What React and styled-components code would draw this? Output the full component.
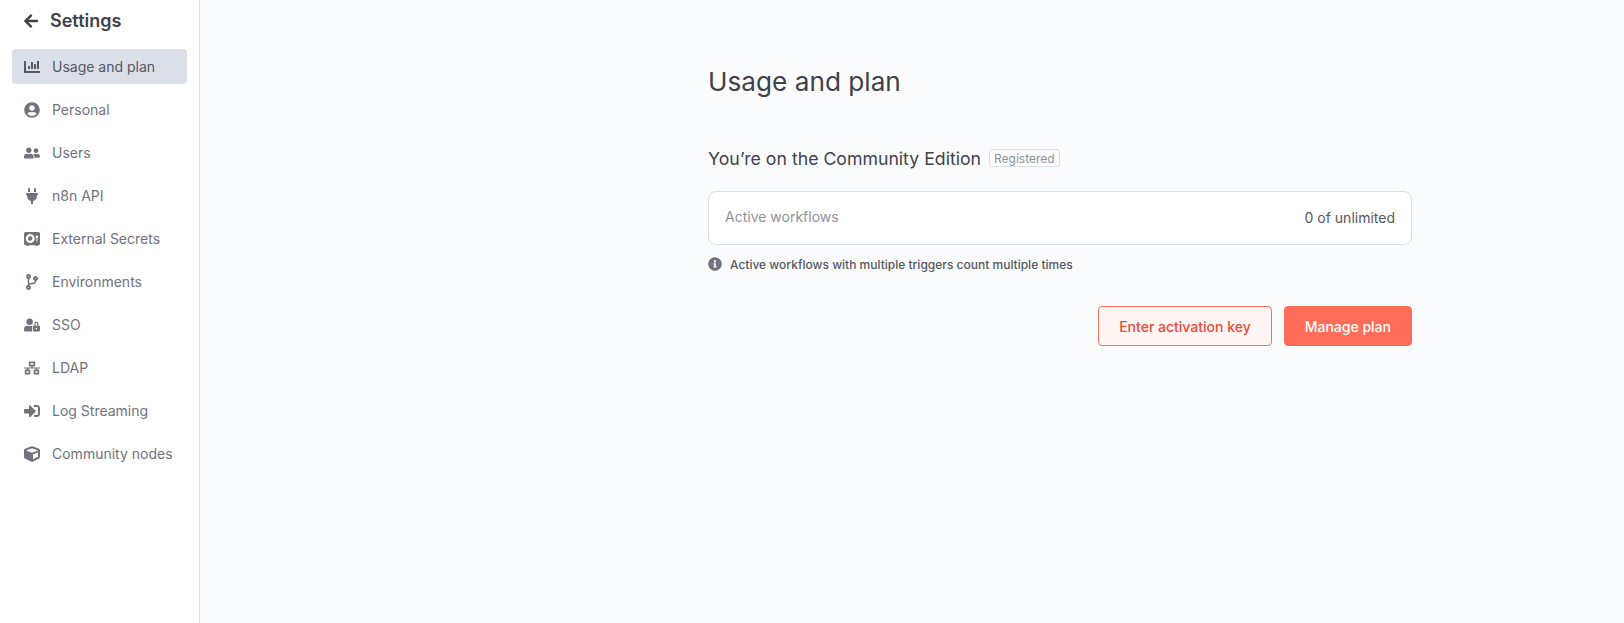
import React from "react";
import styled, { createGlobalStyle } from "styled-components";
import {
  FaChartBar,
  FaUserCircle,
  FaUserFriends,
  FaPlug,
  FaCodeBranch,
  FaUserLock,
  FaNetworkWired,
  FaSignInAlt,
  FaCube,
  FaInfoCircle,
  FaArrowLeft,
} from "react-icons/fa";
import { FaVault } from "react-icons/fa6";

const GlobalStyle = createGlobalStyle`
  html, body {
    margin: 0;
    padding: 0;
    height: 100%;
    background: #fbfcfe;
    font-family: Inter, "Open Sans", sans-serif;
  }
  #root { height: 100%; }
  * { box-sizing: border-box; }
`;

const Page = styled.div`
  display: flex;
  height: 623px;
  overflow: hidden;
`;

const Sidebar = styled.aside`
  width: 200px;
  flex-shrink: 0;
  background: #fff;
  border-right: 1px solid #dbdfe7;
  padding: 0 12px;
`;

const Header = styled.div`
  display: flex;
  align-items: center;
  height: 41px;
  padding-left: 11px;
  gap: 11px;
  color: #3f424b;
  font-size: 18px;
  font-weight: 600;
  svg {
    width: 16px;
    height: 16px;
  }
`;

const Menu = styled.nav`
  display: flex;
  flex-direction: column;
  gap: 8px;
  margin-top: 8px;
`;

const MenuItem = styled.a`
  display: flex;
  align-items: center;
  height: 35px;
  padding-left: 12px;
  border-radius: 4px;
  font-size: 14px;
  color: ${(p) => (p.$active ? "#555761" : "#70737e")};
  background: ${(p) => (p.$active ? "#dbdfe7" : "transparent")};
`;

const MenuIcon = styled.span`
  display: flex;
  justify-content: center;
  width: 16px;
  margin-right: 12px;
  color: inherit;
  svg {
    width: 16px;
    height: 16px;
  }
`;

const Main = styled.main`
  flex: 1;
  padding: 66px 212px 0 508px;
`;

const Content = styled.div`
  display: flex;
  flex-direction: column;
`;

const Title = styled.h1`
  margin: 0;
  font-size: 26.2px;
  line-height: 32px;
  font-weight: 400;
  color: #3f424b;
`;

const Edition = styled.div`
  display: flex;
  align-items: center;
  margin-top: 49px;
  height: 22px;
  font-size: 17.7px;
  color: #3f424b;
`;

const Badge = styled.span`
  display: inline-flex;
  align-items: center;
  height: 18px;
  margin-left: 8px;
  padding: 0 4px;
  border: 1px solid #dbdfe7;
  border-radius: 3px;
  font-size: 12px;
  color: #8f929b;
`;

const Card = styled.div`
  display: flex;
  align-items: center;
  justify-content: space-between;
  height: 54px;
  margin-top: 22px;
  padding: 0 16px 2px;
  background: #fff;
  border: 1px solid #dbdfe7;
  border-radius: 8px;
  font-size: 14px;
`;

const CardLabel = styled.span`
  color: #8f929b;
  padding-bottom: 2px;
`;

const CardValue = styled.span`
  color: #555761;
`;

const Hint = styled.div`
  display: flex;
  align-items: center;
  gap: 8px;
  margin-top: 11px;
  height: 16px;
  font-size: 12px;
  font-weight: 500;
  color: #555761;
  svg {
    width: 14px;
    height: 14px;
    color: #70737e;
  }
`;

const Actions = styled.div`
  display: flex;
  justify-content: flex-end;
  gap: 12px;
  margin-top: 34px;
`;

const Button = styled.button`
  height: 40px;
  padding: 0 20px;
  border-radius: 4px;
  border: 1px solid #ff6d5a;
  font-family: inherit;
  font-size: 14px;
  font-weight: 500;
  color: ${(p) => (p.$variant === "outline" ? "#ea4b3a" : "#fff")};
  background: ${(p) => (p.$variant === "outline" ? "#fff5f3" : "#ff6d5a")};
`;

const menuItems = [
  { label: "Usage and plan", icon: FaChartBar, active: true },
  { label: "Personal", icon: FaUserCircle },
  { label: "Users", icon: FaUserFriends },
  { label: "n8n API", icon: FaPlug },
  { label: "External Secrets", icon: FaVault },
  { label: "Environments", icon: FaCodeBranch },
  { label: "SSO", icon: FaUserLock },
  { label: "LDAP", icon: FaNetworkWired },
  { label: "Log Streaming", icon: FaSignInAlt },
  { label: "Community nodes", icon: FaCube },
];

export default function App() {
  return (
    <>
      <GlobalStyle />
      <Page>
        <Sidebar>
          <Header>
            <FaArrowLeft />
            <span>Settings</span>
          </Header>
          <Menu>
            {menuItems.map(({ label, icon: Icon, active }) => (
              <MenuItem key={label} $active={active}>
                <MenuIcon>
                  <Icon />
                </MenuIcon>
                {label}
              </MenuItem>
            ))}
          </Menu>
        </Sidebar>
        <Main>
          <Content>
            <Title>Usage and plan</Title>
            <Edition>
              You’re on the Community Edition
              <Badge>Registered</Badge>
            </Edition>
            <Card>
              <CardLabel>Active workflows</CardLabel>
              <CardValue>0 of unlimited</CardValue>
            </Card>
            <Hint>
              <FaInfoCircle />
              Active workflows with multiple triggers count multiple times
            </Hint>
            <Actions>
              <Button $variant="outline">Enter activation key</Button>
              <Button>Manage plan</Button>
            </Actions>
          </Content>
        </Main>
      </Page>
    </>
  );
}
